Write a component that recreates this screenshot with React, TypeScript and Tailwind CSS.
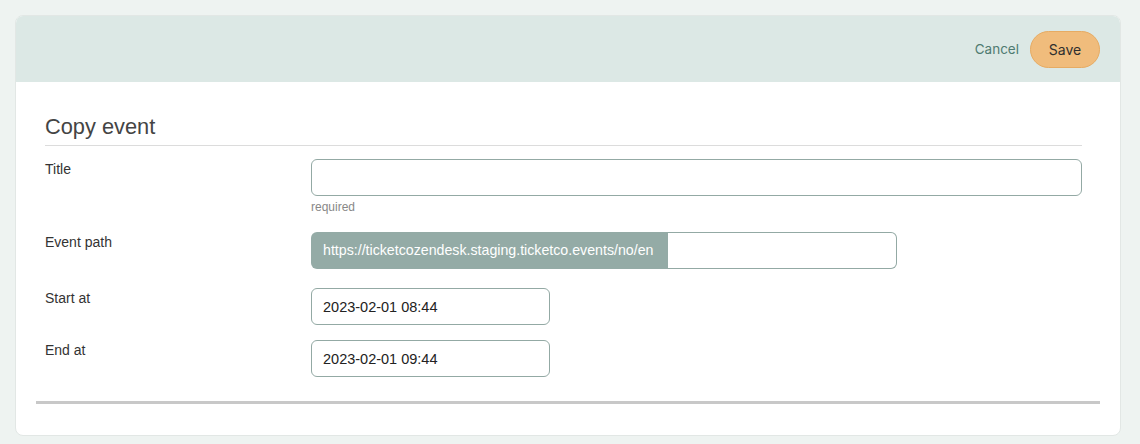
export default function App() {
  return (
    <div className="min-h-[444px] bg-[#eef3f1] pl-[15px] pr-[19px] pt-[15px] pb-[9px] font-['Liberation_Sans',Arial,sans-serif]">
      <div className="overflow-hidden rounded-[8px] border border-[#e2e7e5] bg-white">
        {/* Header bar with actions */}
        <div className="flex h-[66px] items-center justify-end gap-[11px] bg-[#dce8e5] pr-[20px]">
          <button className="font-['Inter',sans-serif] text-[13.5px] text-[#4f7b71]">Cancel</button>
          <button className="h-[37px] w-[70px] rounded-full border border-[#e6ab63] bg-[#f0bc7c] font-['Inter',sans-serif] text-[14px] text-[#2f2f2f]">
            Save
          </button>
        </div>

        <div className="pt-[32px] pb-[31px]">
          <div className="ml-[29px] mr-[38px]">
            <h1 className="border-b border-[#dcdcdc] pb-[5px] text-[21.8px] leading-[26px] text-[#444]">Copy event</h1>

            <div className="mt-[13px] flex">
              <label className="w-[266px] shrink-0 text-[14px] leading-[20px] text-[#333]">Title</label>
              <div className="flex-1">
                <input className="block h-[37px] w-full rounded-[6px] border border-[#93a9a4] bg-white px-[12px] text-[14px] outline-none" />
                <div className="mt-[3px] text-[12px] leading-[16px] text-[#888]">required</div>
              </div>
            </div>

            <div className="mt-[17px] flex">
              <label className="w-[266px] shrink-0 text-[14px] leading-[20px] text-[#333]">Event path</label>
              <div className="flex h-[37px] w-[586px]">
                <span className="flex w-[357px] shrink-0 items-center rounded-l-[6px] bg-[#94aba6] px-[12px] text-[14.2px] text-white">
                  https://ticketcozendesk.staging.ticketco.events/no/en
                </span>
                <input className="block h-full min-w-0 flex-1 rounded-r-[6px] border border-l-0 border-[#93a9a4] bg-white px-[12px] text-[14px] outline-none" />
              </div>
            </div>

            <div className="mt-[19px] flex">
              <label className="w-[266px] shrink-0 text-[14px] leading-[20px] text-[#333]">Start at</label>
              <input
                defaultValue="2023-02-01 08:44"
                className="block h-[37px] w-[239px] rounded-[6px] border border-[#93a9a4] bg-white px-[11px] text-[14.5px] text-[#222] outline-none"
              />
            </div>

            <div className="mt-[15px] flex">
              <label className="w-[266px] shrink-0 text-[14px] leading-[20px] text-[#333]">End at</label>
              <input
                defaultValue="2023-02-01 09:44"
                className="block h-[37px] w-[239px] rounded-[6px] border border-[#93a9a4] bg-white px-[11px] text-[14.5px] text-[#222] outline-none"
              />
            </div>
          </div>

          <div className="mx-[20px] mt-[24px] h-[3px] bg-[#c8c8c8]" />
        </div>
      </div>
    </div>
  );
}
